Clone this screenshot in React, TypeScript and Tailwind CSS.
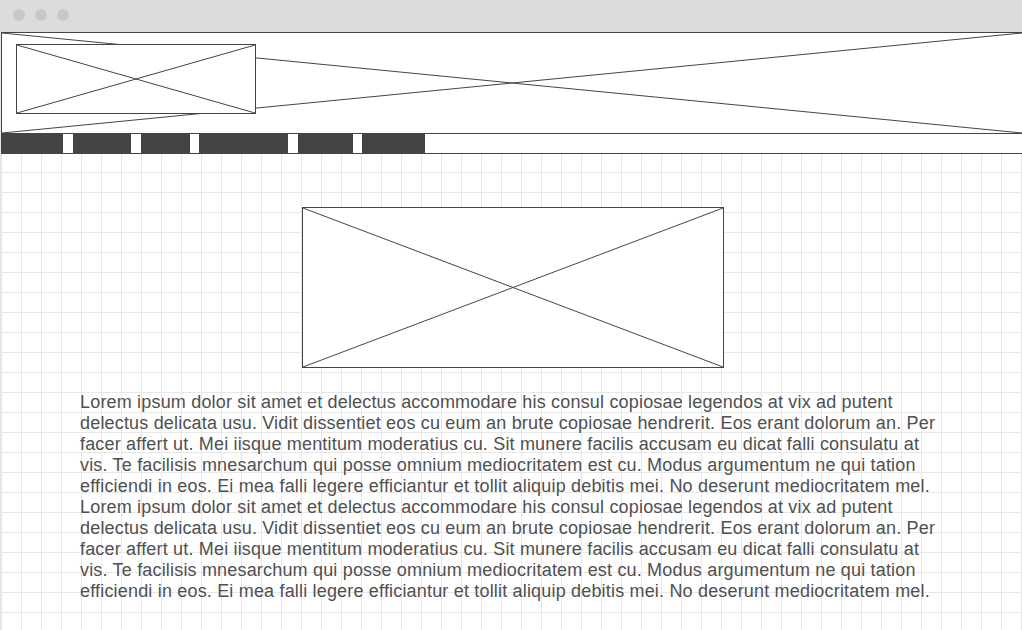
const lorem =
  'Lorem ipsum dolor sit amet et delectus accommodare his consul copiosae legendos at vix ad putent delectus delicata usu. Vidit dissentiet eos cu eum an brute copiosae hendrerit. Eos erant dolorum an. Per facer affert ut. Mei iisque mentitum moderatius cu. Sit munere facilis accusam eu dicat falli consulatu at vis. Te facilisis mnesarchum qui posse omnium mediocritatem est cu. Modus argumentum ne qui tation efficiendi in eos. Ei mea falli legere efficiantur et tollit aliquip debitis mei. No deserunt mediocritatem mel.'

const Cross = () => (
  <svg className="absolute inset-0 h-full w-full" viewBox="0 0 100 100" preserveAspectRatio="none">
    <line x1="0" y1="0" x2="100" y2="100" stroke="#444" strokeWidth="1" vectorEffect="non-scaling-stroke" />
    <line x1="0" y1="100" x2="100" y2="0" stroke="#444" strokeWidth="1" vectorEffect="non-scaling-stroke" />
  </svg>
)

const Placeholder = ({ className }: { className: string }) => (
  <div className={`relative border border-[#444] bg-white ${className}`}>
    <Cross />
  </div>
)

export default function App() {
  return (
    <div className="flex h-[630px] w-full flex-col overflow-hidden bg-white font-['Liberation_Sans',Arial,sans-serif]">
      {/* window chrome */}
      <div className="flex h-8 shrink-0 items-start gap-[10px] bg-[#dcdcdc] pl-[13px] pt-[9px]">
        <div className="h-3 w-3 rounded-full bg-[#c8c8c8]" />
        <div className="h-3 w-3 rounded-full bg-[#c8c8c8]" />
        <div className="h-3 w-3 rounded-full bg-[#c8c8c8]" />
      </div>

      <div className="flex-1 border-l border-[#e6e6e6] bg-[linear-gradient(to_right,#e8e8e8_1px,transparent_1px),linear-gradient(to_bottom,#e8e8e8_1px,transparent_1px)] bg-[size:20px_20px] bg-[position:0_0]">
        {/* header */}
        <div className="relative h-[101px] border-l border-t border-[#444] bg-white">
          <Cross />
          <Placeholder className="ml-[14px] mt-[11px] h-[70px] w-[240px]" />
        </div>

        {/* nav */}
        <div className="flex h-[21px] border-y border-[#444] bg-white">
          <div className="w-[62px] bg-[#444]" />
          <div className="ml-[10px] w-[58px] bg-[#444]" />
          <div className="ml-[10px] w-[49px] bg-[#444]" />
          <div className="ml-[9px] w-[89px] bg-[#444]" />
          <div className="ml-[10px] w-[55px] bg-[#444]" />
          <div className="ml-[9px] w-[63px] bg-[#444]" />
        </div>

        <Placeholder className="ml-[301px] mt-[53px] h-[161px] w-[422px]" />

        <div className="ml-[79px] mt-[24px] w-[862px] text-[18px] leading-[21px] tracking-[0.18px] text-[#505050]">
          <p>{lorem}</p>
          <p>{lorem}</p>
        </div>
      </div>
    </div>
  )
}
